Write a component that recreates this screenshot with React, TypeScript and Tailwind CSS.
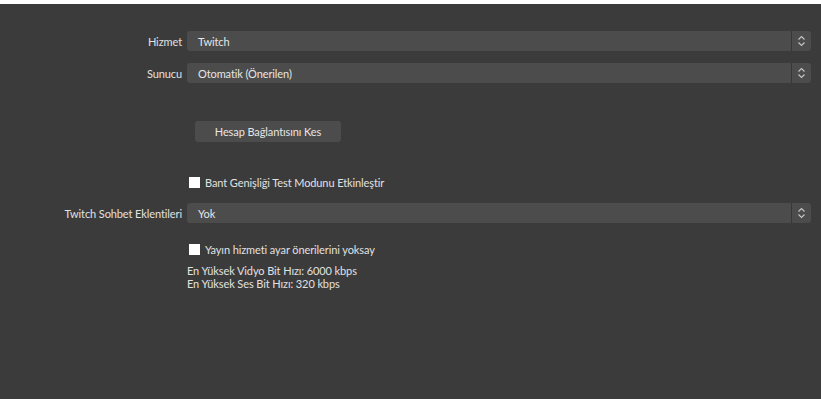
import { ReactNode } from 'react'

function Arrows() {
    return (
        <svg width="9" height="14" viewBox="0 0 9 14" className="text-[#c8c8c8]">
            <path d="M1.5 5.5 L4.5 2.5 L7.5 5.5" fill="none" stroke="currentColor" strokeWidth="1.1" />
            <path d="M1.5 8.5 L4.5 11.5 L7.5 8.5" fill="none" stroke="currentColor" strokeWidth="1.1" />
        </svg>
    )
}

function Combo({ value }: { value: string }) {
    return (
        <div className="flex h-5 flex-1 items-stretch rounded-[3px] bg-[#4c4c4c]">
            <div className="flex flex-1 items-center pl-[11px] text-[#e6e6e6]">{value}</div>
            <div className="flex w-5 items-center justify-center border-l border-[#383838]">
                <Arrows />
            </div>
        </div>
    )
}

function Row({ label, children }: { label: string; children: ReactNode }) {
    return (
        <div className="flex h-5 items-center">
            <div className="w-[187px] shrink-0 pr-[5px] text-right text-[#e1e1e1]">{label}</div>
            {children}
        </div>
    )
}

function Check({ label }: { label: string }) {
    return (
        <div className="ml-[189px] flex h-[15px] items-center gap-[5px]">
            <div className="h-[11px] w-[11px] shrink-0 bg-white" />
            <span className="text-[#e1e1e1]">{label}</span>
        </div>
    )
}

export default function App() {
    return (
        <div
            className="h-[399px] w-[821px] overflow-hidden bg-[#3b3b3b] text-[11px] leading-[15px] tracking-[-0.1px]"
            style={{ fontFamily: 'Lato, sans-serif' }}
        >
            <div className="h-1 bg-white" />
            <div className="flex flex-col pr-[10px] pt-[27px]">
                <Row label="Hizmet">
                    <Combo value="Twitch" />
                </Row>
                <div className="mt-3">
                    <Row label="Sunucu">
                        <Combo value="Otomatik (Önerilen)" />
                    </Row>
                </div>
                <div className="ml-[195px] mt-[38px]">
                    <button className="flex h-[21px] w-[146px] items-center justify-center rounded-[3px] bg-[#4c4c4c] text-[#e6e6e6]">
                        Hesap Bağlantısını Kes
                    </button>
                </div>
                <div className="mt-[33px]">
                    <Check label="Bant Genişliği Test Modunu Etkinleştir" />
                </div>
                <div className="mt-[13px]">
                    <Row label="Twitch Sohbet Eklentileri">
                        <Combo value="Yok" />
                    </Row>
                </div>
                <div className="mt-[19px]">
                    <Check label="Yayın hizmeti ayar önerilerini yoksay" />
                </div>
                <div className="ml-[187px] mt-[7px] flex flex-col leading-[13px] text-[#e1e1e1]">
                    <span>En Yüksek Vidyo Bit Hızı: 6000 kbps</span>
                    <span>En Yüksek Ses Bit Hızı: 320 kbps</span>
                </div>
            </div>
        </div>
    )
}
